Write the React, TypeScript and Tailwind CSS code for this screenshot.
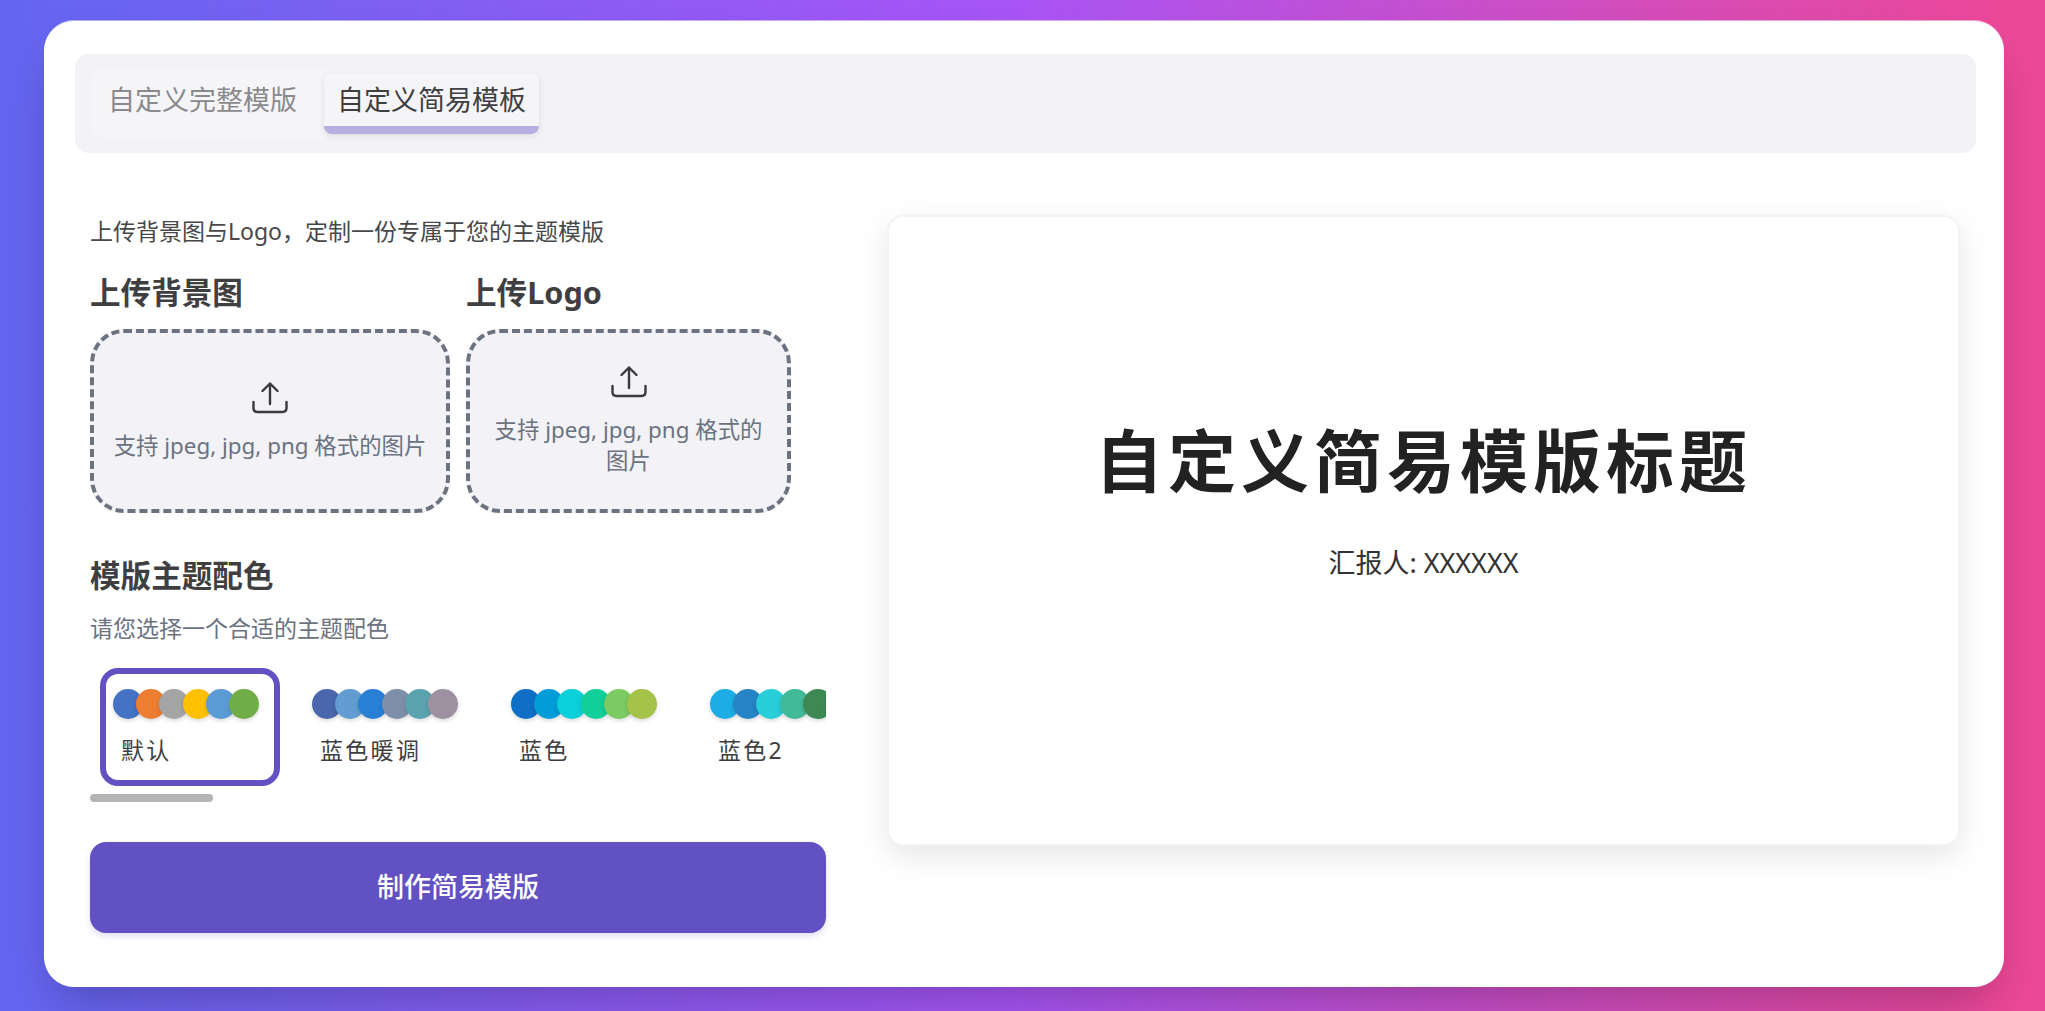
const FONT = 'font-["Noto_Sans","Noto_Sans_CJK_SC",sans-serif]';

const palettes: { name: string; colors: string[] }[] = [
  { name: "默认", colors: ["#4472c4", "#ed7d31", "#a5a5a5", "#ffc000", "#5b9bd5", "#70ad47"] },
  { name: "蓝色暖调", colors: ["#4a66ac", "#629dd1", "#297fd5", "#7f8fa9", "#5aa2ae", "#9d90a0"] },
  { name: "蓝色", colors: ["#0f6fc6", "#009dd9", "#0bd0d9", "#10cf9b", "#7cca62", "#a5c249"] },
  { name: "蓝色2", colors: ["#1cade4", "#2683c6", "#27ced7", "#42ba97", "#3e8853", "#62a39f"] },
];

function UploadIcon() {
  return (
    <svg width="36" height="32" viewBox="0 0 36 32" fill="none" stroke="#3a3a3c" strokeWidth="2.4" strokeLinecap="round" strokeLinejoin="round">
      <path d="M18 2V22" />
      <path d="M10.5 9L18 1.5L25.5 9" />
      <path d="M1.5 20V26C1.5 28.5 3 30 5.5 30H30.5C33 30 34.5 28.5 34.5 26V20" />
    </svg>
  );
}

function Swatch({ name, colors, selected }: { name: string; colors: string[]; selected?: boolean }) {
  return (
    <div className={`flex h-[118px] w-[180px] shrink-0 flex-col rounded-[18px] border-[6px] px-[7px] pt-[15px] ${selected ? "border-[#6251c2]" : "border-transparent"}`}>
      <div className="flex">
        {colors.map((c, i) => (
          <span
            key={c}
            className={`h-[30px] w-[30px] shrink-0 rounded-full shadow-[0_2px_4px_rgba(0,0,0,0.15)] ${i === 0 ? "" : "-ml-[6.8px]"}`}
            style={{ backgroundColor: c }}
          />
        ))}
      </div>
      <div className="mt-[15px] whitespace-nowrap pl-[8px] text-[23px] leading-[32px] tracking-[2.3px] text-[#3f3f42]">{name}</div>
    </div>
  );
}

function UploadBox() {
  return (
    <div className="mt-[17px] flex h-[184px] flex-col items-center justify-center rounded-[34px] border-[4px] border-dashed border-[#6b7280] bg-[#f2f2f7] px-[16px]">
      <UploadIcon />
      <span className="mt-[16px] text-center text-[22.4px] leading-[31px] text-[#6b7280]">支持 jpeg, jpg, png 格式的图片</span>
    </div>
  );
}

export default function App() {
  return (
    <div className={`${FONT} flex h-[1011px] w-full items-start justify-center overflow-hidden bg-[linear-gradient(90deg,#6366f1_0%,#a855f7_49%,#ec4899_98%)] pl-[3px] pt-[21px]`}>
      <div className="flex h-[966px] w-[1960px] flex-col rounded-[30px] bg-white px-[31px] pt-[33px] shadow-[0_25px_50px_-12px_rgba(0,0,0,0.25),0_-1px_0_rgba(255,255,255,0.5)]">
        <div className="flex h-[99px] w-[1901px] items-center rounded-[14px] bg-[#f2f2f7] px-[16px]">
          <div className="flex h-[69px] items-start rounded-[10px] bg-[#f5f5f7]">
            <div className="flex h-[69px] w-[233px] items-center pb-[7px] pl-[17px] text-[27px] text-[#8a8a8e]">自定义完整模版</div>
            <div className="mt-[4px] flex h-[61px] w-[215px] items-center justify-center rounded-[8px] border-b-[8px] border-[#b9aee2] bg-[#f5f5f7] pt-[1px] text-[27px] text-[#3f3f42] shadow-[0_2px_6px_rgba(0,0,0,0.1)]">自定义简易模板</div>
          </div>
        </div>

        <div className="mt-[62px] flex items-start justify-between">
          <div className="ml-[15px] flex w-[736px] flex-col">
            <p className="text-[23px] leading-[32px] text-[#48484a]">上传背景图与Logo，定制一份专属于您的主题模版</p>
            <div className="mt-[25px] flex gap-[16px]">
              <div className="flex w-[360px] flex-col">
                <h2 className="text-[30.6px] font-bold leading-[40px] text-[#3f3f42]">上传背景图</h2>
                <UploadBox />
              </div>
              <div className="flex w-[325px] flex-col">
                <h2 className="text-[30.6px] font-bold leading-[40px] text-[#3f3f42]">上传Logo</h2>
                <UploadBox />
              </div>
            </div>

            <h2 className="mt-[42px] text-[30.6px] font-bold leading-[40px] text-[#3f3f42]">模版主题配色</h2>
            <p className="mt-[17px] text-[23px] leading-[32px] text-[#6b7280]">请您选择一个合适的主题配色</p>
            <div className="mt-[24px] overflow-hidden">
              <div className="flex gap-[19px] pl-[10px]">
                {palettes.map((p, i) => (
                  <Swatch key={p.name} name={p.name} colors={p.colors} selected={i === 0} />
                ))}
              </div>
            </div>
            <div className="mt-[8px] h-[8px] w-[123px] rounded-full bg-[#b4b4b4]" />
            <button className="mt-[40px] flex h-[91px] w-full items-center justify-center rounded-[16px] bg-[#6251c2] text-[27px] font-medium text-white shadow-[0_3px_6px_rgba(98,81,194,0.2)]">制作简易模版</button>
          </div>

          <div className="mr-[13px] flex h-[631px] w-[1073px] flex-col items-center justify-center rounded-[16px] border-2 border-[#f2f2f7] bg-white pb-[64px] shadow-[0_10px_30px_rgba(0,0,0,0.1)]">
            <div className="text-[68px] font-bold leading-[90px] tracking-[5px] text-[#222222]">自定义简易模版标题</div>
            <div className="mt-[38px] text-[27px] leading-[38px] text-[#333333]">汇报人: XXXXXX</div>
          </div>
        </div>
      </div>
    </div>
  );
}
